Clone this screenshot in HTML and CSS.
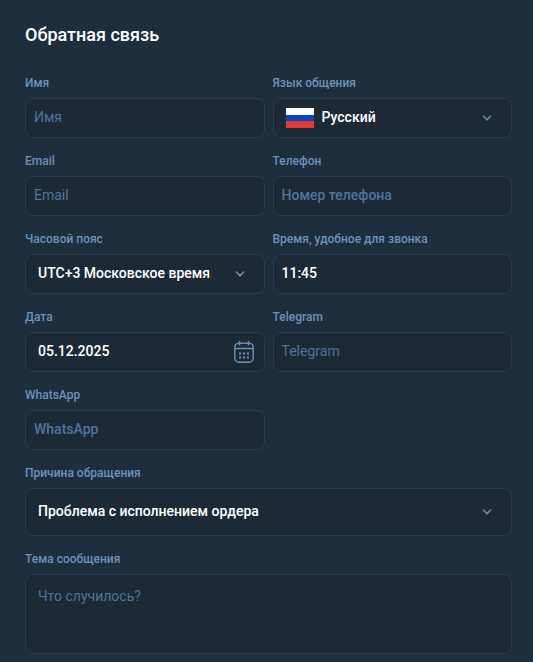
FILE: index.html
```
<!DOCTYPE html>
<html lang="ru">
    <head>
        <meta charset="utf-8">
        <title>Обратная связь</title>
        <meta name="viewport" content="width=device-width, initial-scale=1.0">
        <link rel="stylesheet" href="styles.css">
    </head>
    <body>
        <form class="feedback">
            <h1>Обратная связь</h1>
            <div class="fields">
                <div class="field">
                    <label for="name">Имя</label>
                    <input type="text" class="control" id="name" name="name" placeholder="Имя">
                </div>
                <div class="field">
                    <label for="lang">Язык общения</label>
                    <div class="box">
                        <svg class="flag" viewBox="0 0 28 20" aria-hidden="true">
                            <rect width="28" height="20" fill="#fff"/>
                            <rect y="7" width="28" height="13" fill="#0b46b8"/>
                            <rect y="13" width="28" height="7" fill="#e53b35"/>
                        </svg>
                        <select class="control with-flag" id="lang" name="lang">
                            <option>Русский</option>
                            <option>English</option>
                        </select>
                        <svg class="arrow" viewBox="0 0 10 6" aria-hidden="true"><path d="M1.5 1L5 4.8 8.5 1"/></svg>
                    </div>
                </div>
                <div class="field">
                    <label for="email">Email</label>
                    <input type="email" class="control" id="email" name="email" placeholder="Email">
                </div>
                <div class="field">
                    <label for="phone">Телефон</label>
                    <input type="tel" class="control strong" id="phone" name="phone" placeholder="Номер телефона">
                </div>
                <div class="field">
                    <label for="zone">Часовой пояс</label>
                    <div class="box">
                        <select class="control" id="zone" name="zone">
                            <option>UTC+3 Московское время</option>
                        </select>
                        <svg class="arrow" viewBox="0 0 10 6" aria-hidden="true"><path d="M1.5 1L5 4.8 8.5 1"/></svg>
                    </div>
                </div>
                <div class="field">
                    <label for="time">Время, удобное для звонка</label>
                    <input type="text" class="control" id="time" name="time" value="11:45">
                </div>
                <div class="field">
                    <label for="date">Дата</label>
                    <div class="box">
                        <input type="text" class="control date" id="date" name="date" value="05.12.2025">
                        <svg class="calendar" viewBox="0 0 22 24" aria-hidden="true">
                            <rect x="1.8" y="3.2" width="18.4" height="19" rx="4"/>
                            <path d="M2 8.5h18M6.5 1.5v3.5M15.5 1.5v3.5"/>
                            <path class="dots" d="M6 13.5h2M10 13.5h2M14 13.5h2M6 17.5h2M10 17.5h2M14 17.5h2"/>
                        </svg>
                    </div>
                </div>
                <div class="field">
                    <label for="telegram">Telegram</label>
                    <input type="text" class="control" id="telegram" name="telegram" placeholder="Telegram">
                </div>
                <div class="field">
                    <label for="whatsapp">WhatsApp</label>
                    <input type="text" class="control strong" id="whatsapp" name="whatsapp" placeholder="WhatsApp">
                </div>
                <div class="field wide">
                    <label for="reason">Причина обращения</label>
                    <div class="box">
                        <select class="control tall" id="reason" name="reason">
                            <option>Проблема с исполнением ордера</option>
                        </select>
                        <svg class="arrow" viewBox="0 0 10 6" aria-hidden="true"><path d="M1.5 1L5 4.8 8.5 1"/></svg>
                    </div>
                </div>
                <div class="field wide">
                    <label for="subject">Тема сообщения</label>
                    <textarea class="control" id="subject" name="subject" placeholder="Что случилось?"></textarea>
                </div>
            </div>
        </form>
    </body>
</html>
```
FILE: styles.css
```
* {
    box-sizing: border-box;
    margin: 0;
}

body {
    background: #1f2e3c;
    color: white;
    font-family: Roboto, "Liberation Sans", sans-serif;
}

.feedback {
    padding: 24px 21px 8px 25px;
}

h1 {
    font-size: 18px;
    line-height: 22px;
    font-weight: 500;
    margin-bottom: 28px;
}

.fields {
    display: grid;
    grid-template-columns: 1fr 1fr;
    gap: 14px 8px;
}

.field {
    min-width: 0;
}

.wide {
    grid-column: 1 / -1;
}

label {
    display: block;
    font-size: 12px;
    line-height: 18px;
    font-weight: 500;
    color: #6c92bc;
    margin-bottom: 6px;
}

.box {
    position: relative;
}

.control {
    display: block;
    width: 100%;
    height: 40px;
    padding: 0 8px 2px;
    border: 1px solid #2a3c4f;
    border-radius: 8px;
    outline: 0;
    background: #1d2a36;
    color: white;
    font-family: inherit;
    font-size: 14px;
    font-weight: 500;
    -webkit-appearance: none;
    appearance: none;
}

.control:focus {
    border-color: #6c92bc;
}

.control::placeholder {
    color: #4f749e;
    font-weight: 400;
}

.strong::placeholder {
    font-weight: 500;
}

select.control {
    padding: 0 36px 2px 12px;
    cursor: pointer;
}

select.with-flag {
    padding-left: 48px;
}

.date {
    padding: 0 36px 2px 12px;
}

select.tall {
    height: 48px;
}

textarea.control {
    height: 80px;
    padding: 11px 12px;
    line-height: 20px;
    resize: none;
}

/* icons lie over the controls */
.flag,
.arrow,
.calendar {
    position: absolute;
    top: 50%;
    transform: translateY(-50%);
    pointer-events: none;
}

.flag {
    left: 13px;
    width: 28px;
    height: 20px;
    z-index: 1;
}

.arrow {
    right: 20px;
    width: 10px;
    height: 6px;
}

.calendar {
    right: 10px;
    width: 22px;
    height: 24px;
}

.arrow path,
.calendar {
    fill: none;
    stroke: #6c8db5;
    stroke-width: 1.5;
    stroke-linecap: round;
}

.calendar .dots {
    stroke-width: 2;
    stroke-linecap: butt;
}
```
